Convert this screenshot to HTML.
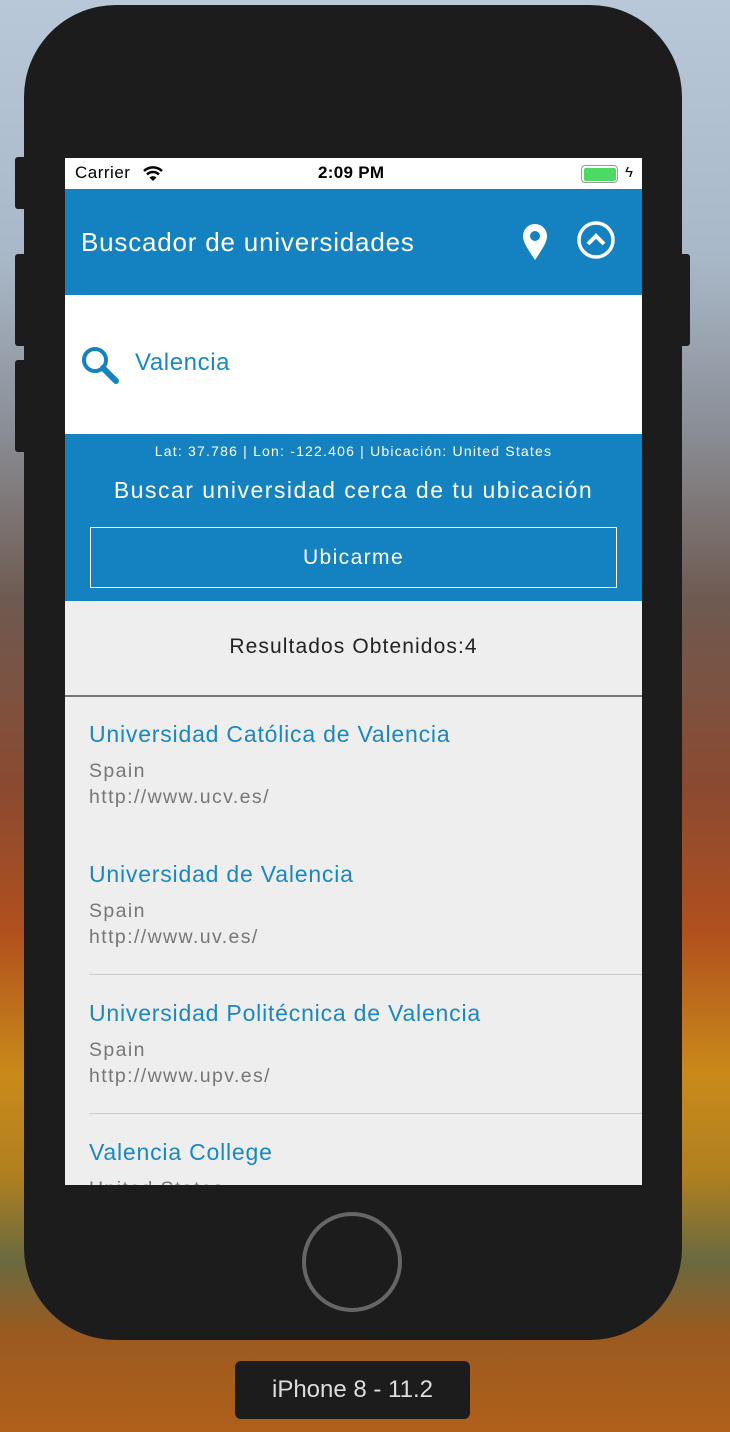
<!DOCTYPE html>
<html><head><meta charset="utf-8"><style>
*{margin:0;padding:0;box-sizing:border-box}
body{width:730px;height:1432px;overflow:hidden;position:relative;font-family:"Liberation Sans",sans-serif;
background:linear-gradient(180deg,#b9c8d8 0%,#a9b8c8 18%,#8a8e96 30%,#6e5a50 42%,#8a4a30 55%,#b0501e 65%,#c98a1a 75%,#b08020 82%,#6a6a40 88%,#9a5a20 93%,#b0601a 100%)}
.phone{position:absolute;left:24px;top:5px;width:658px;height:1335px;background:#1c1c1c;border-radius:92px}
.btn{position:absolute;background:#1c1c1c;border-radius:3px}
.screen{position:absolute;left:65px;top:158px;width:577px;height:1027px;background:#eee;overflow:hidden}
.status{height:31px;background:#fff;position:relative;font-size:17px}
.nav{height:106px;background:#1482c0;position:relative;color:#fff}
.search{height:139px;background:#fff;position:relative}
.loc{height:167px;background:#1482c0;color:#fff;text-align:center;position:relative}
.res{height:96px;text-align:center;font-size:21px;letter-spacing:1.1px;color:#222;line-height:92px;border-bottom:2px solid #777}
.item{margin-left:24px;height:139px;padding-top:25px;border-bottom:1px solid #ccc}
.item .t{color:#1a87c5;font-size:23px;letter-spacing:0.8px}
.item .s{color:#777;font-size:19.5px;letter-spacing:1.4px;margin-top:10px;line-height:26px}
.home{position:absolute;left:302px;top:1212px;width:100px;height:100px;border:4px solid #666;border-radius:50%}
.label{position:absolute;left:235px;top:1361px;width:235px;height:58px;background:#1c1c1c;border-radius:6px;color:#ddd;font-size:24px;text-align:center;line-height:58px}
</style></head><body>
<div class="btn" style="left:15px;top:157px;width:12px;height:52px"></div>
<div class="btn" style="left:15px;top:254px;width:12px;height:92px"></div>
<div class="btn" style="left:15px;top:360px;width:12px;height:92px"></div>
<div class="btn" style="left:678px;top:254px;width:12px;height:92px"></div>
<div class="phone"></div>
<div class="screen">
 <div class="status">
  <span style="position:absolute;left:10px;top:5px;letter-spacing:0.5px">Carrier</span>
  <svg style="position:absolute;left:77px;top:7px" width="22" height="17" viewBox="0 0 22 17"><path d="M11 16L14.5 12.5A5 5 0 0 0 7.5 12.5Z" fill="#000"/><path d="M5 9.5A8.5 8.5 0 0 1 17 9.5M2 6A13 13 0 0 1 20 6" fill="none" stroke="#000" stroke-width="2.5"/></svg>
  <span style="position:absolute;left:253px;top:5px;font-weight:bold;letter-spacing:0.3px">2:09 PM</span>
  <div style="position:absolute;left:516px;top:7px;width:37px;height:18px;border:1.5px solid #999;border-radius:4px;padding:1.5px"><div style="background:#4cd964;width:100%;height:100%;border-radius:2px"></div></div>
  <span style="position:absolute;left:560px;top:6px;font-size:15px">ϟ</span>
 </div>
 <div class="nav">
  <span style="position:absolute;left:16px;top:38px;font-size:26px;letter-spacing:0.8px">Buscador de universidades</span>
  <svg style="position:absolute;left:457px;top:34px" width="26" height="38" viewBox="0 0 26 38"><path d="M13 37C5 25 1 19 1 13A12 12 0 0 1 25 13C25 19 21 25 13 37Z" fill="#fff"/><circle cx="13" cy="13" r="5" fill="#1482c0"/></svg>
  <svg style="position:absolute;left:511px;top:31px" width="40" height="40" viewBox="0 0 40 40"><circle cx="20" cy="20" r="17" fill="none" stroke="#fff" stroke-width="3.5"/><path d="M12 24L20 16L28 24" fill="none" stroke="#fff" stroke-width="4"/></svg>
 </div>
 <div class="search">
  <svg style="position:absolute;left:15px;top:50px" width="40" height="40" viewBox="0 0 40 40"><circle cx="15" cy="15" r="11" fill="none" stroke="#1482c0" stroke-width="4"/><path d="M23 23L36 36" stroke="#1482c0" stroke-width="6" stroke-linecap="round"/></svg>
  <span style="position:absolute;left:70px;top:54px;font-size:24px;letter-spacing:0.6px;color:#1a87c5">Valencia</span>
 </div>
 <div class="loc">
  <div style="font-size:14px;letter-spacing:1.2px;padding-top:9px">Lat: 37.786 | Lon: -122.406 | Ubicación: United States</div>
  <div style="font-size:23px;letter-spacing:1.5px;margin-top:18px">Buscar universidad cerca de tu ubicación</div>
  <div style="position:absolute;left:25px;top:93px;width:527px;height:61px;border:1px solid #fff;line-height:60px;font-size:21px;letter-spacing:1.4px">Ubicarme</div>
 </div>
 <div class="res">Resultados Obtenidos:4</div>
 <div class="item" style="border-bottom:none;height:139px;padding-top:24px"><div class="t">Universidad Católica de Valencia</div><div class="s">Spain<br>http://www.ucv.es/</div></div>
 <div class="item"><div class="t">Universidad de Valencia</div><div class="s">Spain<br>http://www.uv.es/</div></div>
 <div class="item"><div class="t">Universidad Politécnica de Valencia</div><div class="s">Spain<br>http://www.upv.es/</div></div>
 <div class="item"><div class="t">Valencia College</div><div class="s">United States</div></div>
</div>
<div class="home"></div>
<div class="label">iPhone 8 - 11.2</div>
</body></html>
